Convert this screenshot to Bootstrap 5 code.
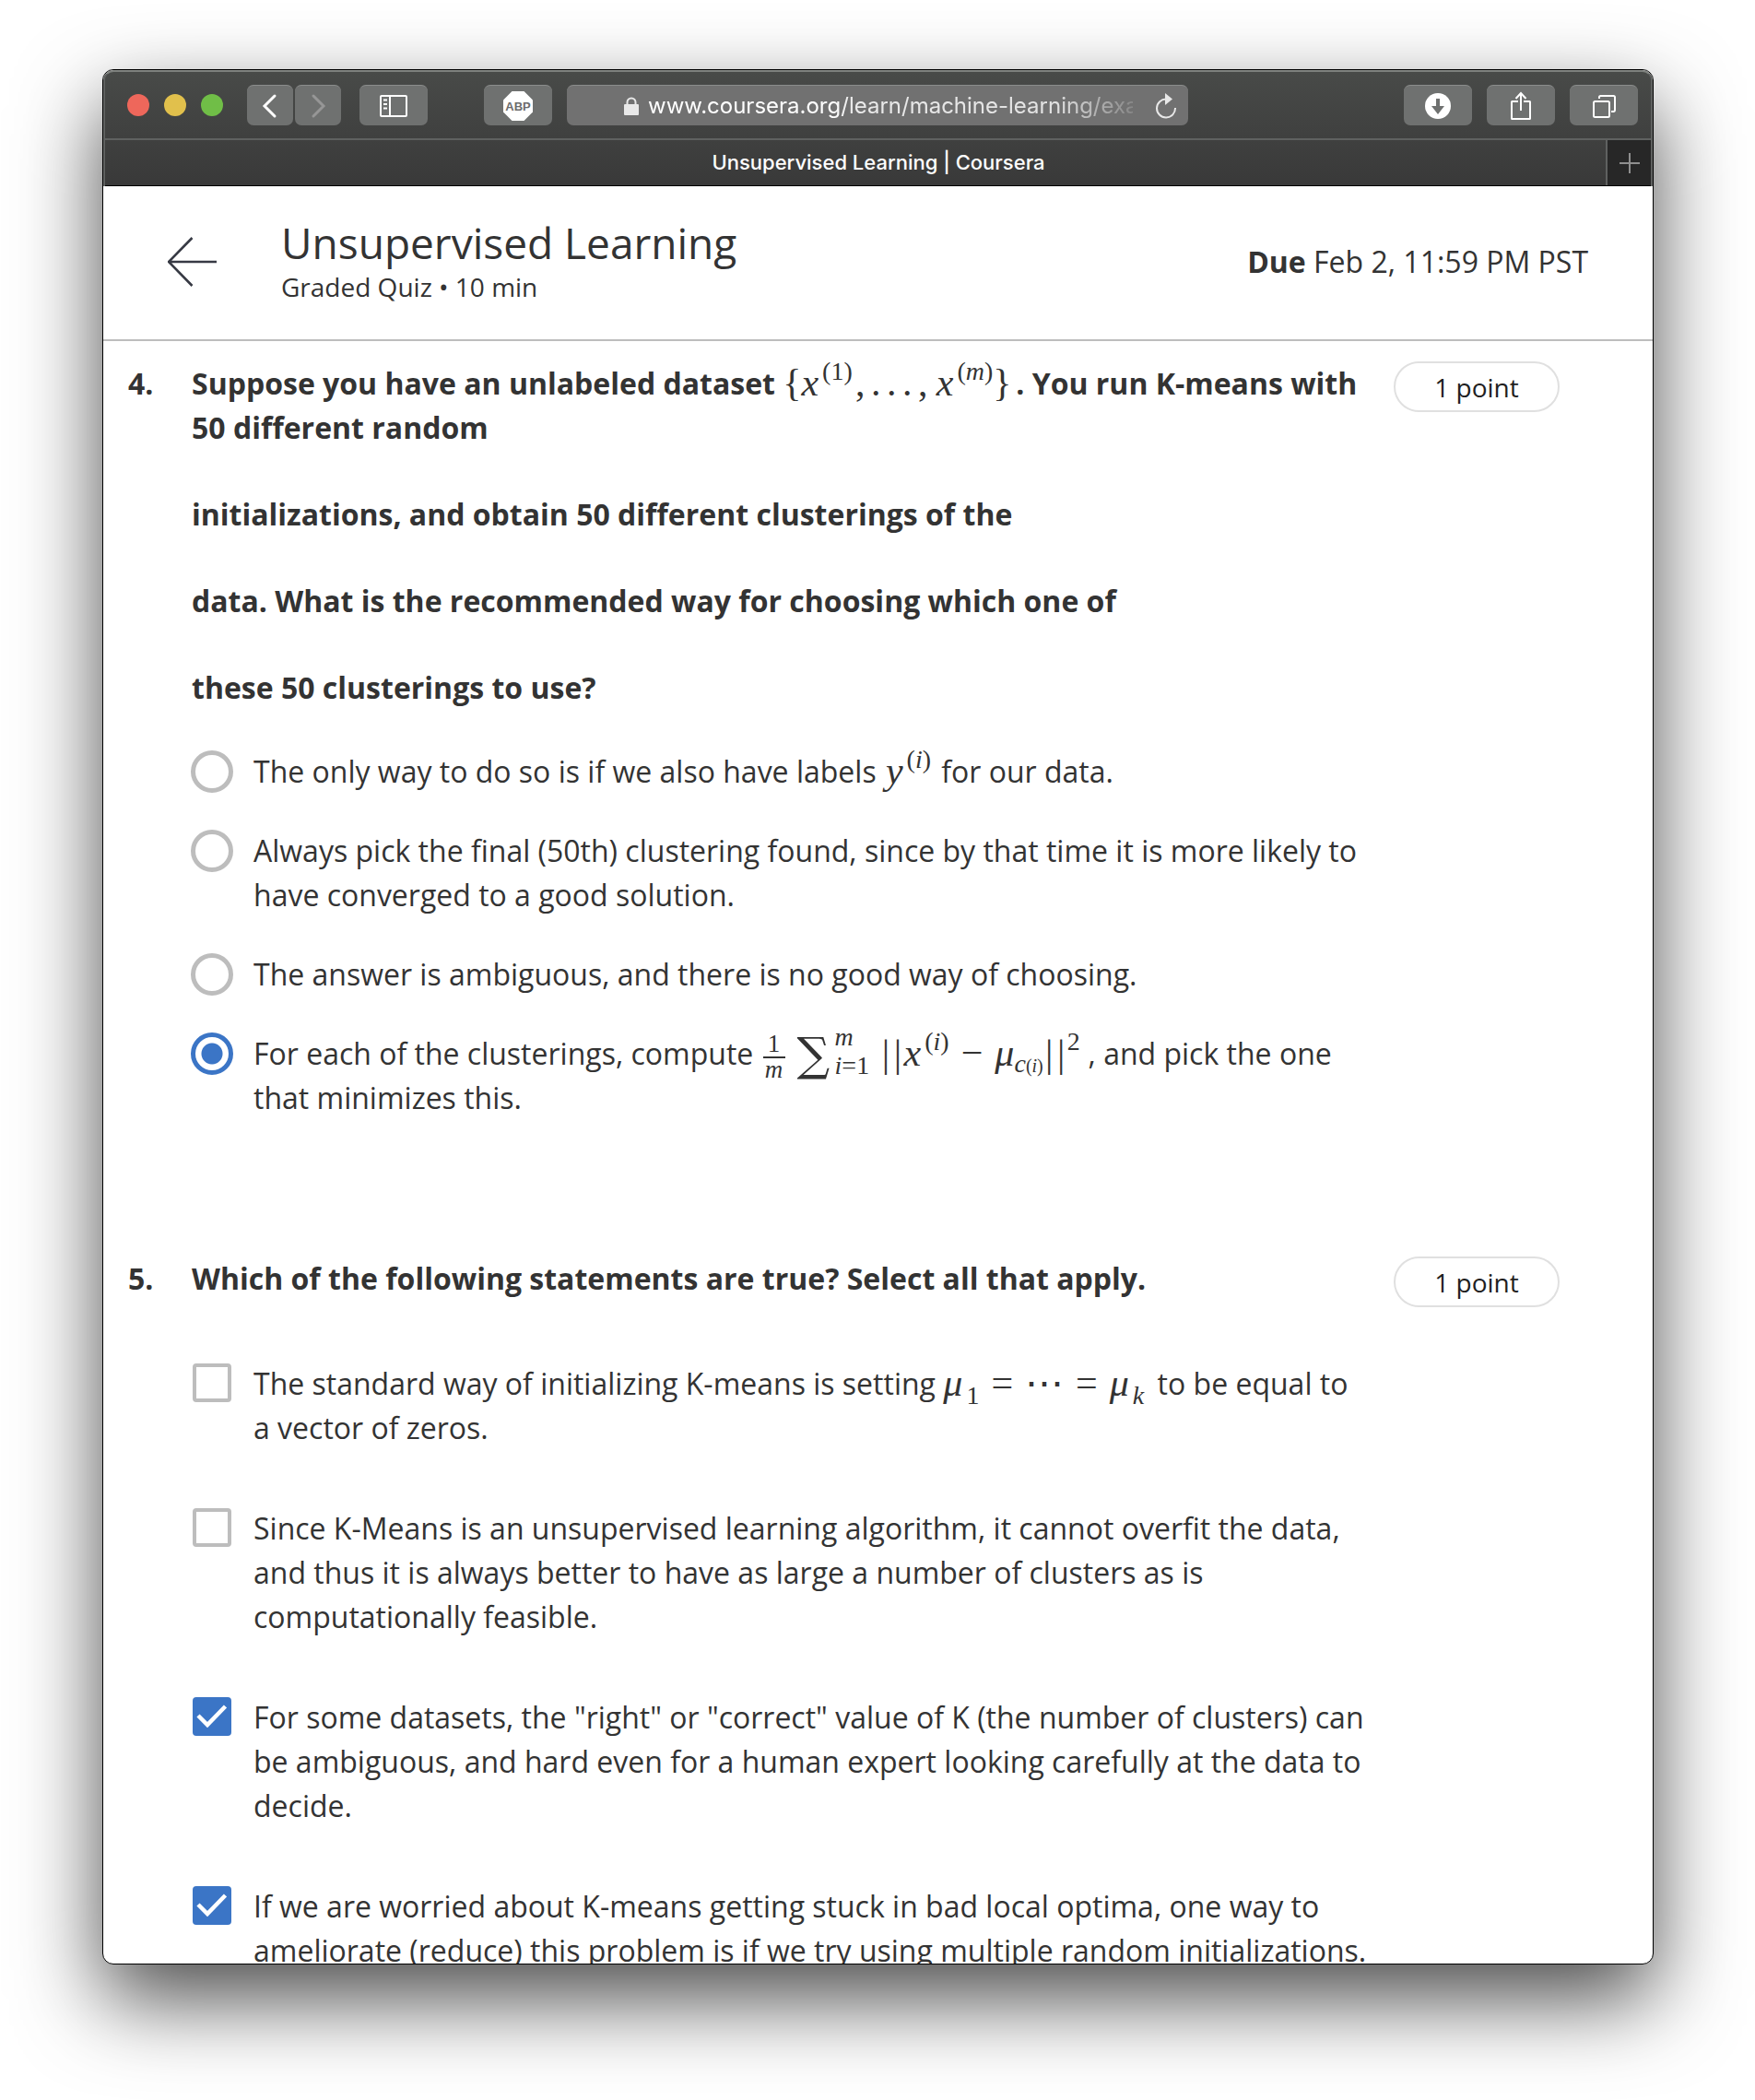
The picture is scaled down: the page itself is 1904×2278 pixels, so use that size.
<!DOCTYPE html>
<html lang="en">
<head>
<meta charset="utf-8">
<meta name="viewport" content="width=device-width, initial-scale=1">
<title>Unsupervised Learning | Coursera</title>
<link href="https://cdn.jsdelivr.net/npm/bootstrap@5.3.0/dist/css/bootstrap.min.css" rel="stylesheet">
<style>
body{background:#fff;color:#333;font-family:"Open Sans","Noto Sans",sans-serif;font-size:32px;line-height:48px}
.desk{height:100vh;padding:75px 110px 147px 111px}
.win{border:1px solid #000;border-radius:12px;background:#fff;box-shadow:0 38px 92px rgba(0,0,0,.7)}
/* browser chrome */
.chrome{background:linear-gradient(#484a48,#393939);border:solid #5f6160;border-width:2px 2px 0;border-top-color:#7f827f;border-radius:11px 11px 0 0;font-family:Inter,"Liberation Sans",sans-serif}
.tools{padding:14px 14px 14px 24px;height:72px}
.lamp{width:24px;height:24px;border-radius:50%;margin-right:16px}
.lamp-r{background:#ee675b}.lamp-y{background:#e1c04c}.lamp-g{background:#70be47}
.pair{gap:2px;margin:0 20px 0 10px}
.tool{width:74px;height:44px;padding:0;border:0;border-top:1px solid #8b8d8c;border-radius:7px;background:#6f7170;color:#fff}
.tool.half{width:50px}
.tool.apart{margin-left:61px}
.tool svg{display:block;margin:auto}
.urlbar{width:674px;height:44px;border-top:1px solid #8b8d8c;border-radius:7px;background:#717171;margin-left:16px;padding:0 12px 0 62px}
.urlbar input{flex:1;min-width:0;background:none;border:0;padding:0;margin:0 24px 0 10px;color:#fff;outline:0;font-size:24px;line-height:40px;-webkit-mask-image:linear-gradient(90deg,#000 38%,rgba(0,0,0,.85) 42%,rgba(0,0,0,.8) 84%,transparent 104%);mask-image:linear-gradient(90deg,#000 38%,rgba(0,0,0,.85) 42%,rgba(0,0,0,.8) 84%,transparent 104%)}
.tabs{height:52px;border-top:2px solid #5f6160;border-bottom:1px solid #000}
.tabname{padding-left:50px;font-size:22px;line-height:48px;font-weight:500;color:#fff;text-decoration:none}
.plus{width:49px;border:0;border-left:2px solid #5f6160;background:#272727;padding:0}
/* quiz header */
.quizhead{height:168px;border-bottom:2px solid #bdbdbd;padding:0 70px 2px}
.quizhead h1{font-size:46px;line-height:54px;font-weight:400;margin:0}
.heading{padding-left:69px}
.sub28{font-size:28px;line-height:42px}
/* questions */
.quiz{min-height:0}
.qblock{padding:22px 101px 0 27px}
.qblock + .qblock{padding-top:148px}
.qnum{width:69px}
.ask{font-weight:700}
.ask p{margin:0 0 46px}
.pill{width:180px;height:55px;border:2px solid #e0e0e0;border-radius:28px;font-size:28px;line-height:53px;color:#1f1f1f;margin-left:24px}
.opt{display:flex;align-items:flex-start}
.opt input{appearance:none;flex:none;margin:0;background:#fff center/contain no-repeat;border:5px solid #bdbdbd}
.opt input[type=radio]{width:46px;height:46px;border-radius:50%;margin:1px 22px 0 -1px}
.opt input[type=radio]:checked{border-color:#3b75c6;background:radial-gradient(circle,#3b75c6 11px,#fff 12px)}
.opt input[type=checkbox]{width:42px;height:42px;border-width:4px;border-radius:4px;margin:2px 24px 0 1px}
.opt input[type=checkbox]:checked{border:0;background-color:#3b75c6;background-image:url("data:image/svg+xml,%3Csvg xmlns='http://www.w3.org/2000/svg' viewBox='0 0 42 42'%3E%3Cpath d='M6 20l10 10L35.500 10' fill='none' stroke='%23fff' stroke-width='4.500'/%3E%3C/svg%3E")}
.radios{gap:38px;padding-top:43px}
.checks{gap:61px;padding-top:66px}
/* formulas: tokens sit on the bottom edge of a 40px box, raised or lowered by a margin */
.fx{display:inline-flex;align-items:flex-end;height:40px;vertical-align:middle;white-space:nowrap;font-family:"Liberation Serif",serif;font-weight:400;font-size:42px;line-height:40px}
.fx>*{flex:none;margin-bottom:4px}
.fx>.up,.fx>.dn{font-size:28px;line-height:28px;margin-left:4px}
.fx>.up{margin-bottom:22px}
.fx>.dn{margin-bottom:-4px}
.fx small{font-size:20px}
.fx>.cell{width:17px;text-align:center}
.fx>.bar{width:13px;text-align:center;margin-bottom:3px}
.fx>.sp{width:6px}
.fx>.sp2{width:13px}
.fx-set{width:253px}.fx-y{width:54px;padding-left:2px}.fx-cost{width:355px;padding-left:2px}.fx-mu{width:224px}
.fx>.frac{width:24px;text-align:center;font-size:27px;line-height:24px;margin-bottom:-6px}
.frac span{display:block}
.frac span:first-child{border-bottom:2px solid #333;padding-bottom:2px}
.fx>.lims{width:46px;padding-left:3px;font-size:28px;line-height:24px;margin-bottom:-2px}
.lims span{display:block}
.lims span:first-child{margin-bottom:7px}
.fx>.big{width:38px;font-family:"DejaVu Serif","Liberation Serif",serif;font-size:50px;margin-bottom:2px}
</style>
</head>
<body>
<div class="desk d-flex">
<div class="win flex-fill d-flex flex-column overflow-hidden">
 <div class="chrome flex-shrink-0">
  <div class="tools d-flex align-items-center">
   <span class="lamp lamp-r"></span><span class="lamp lamp-y"></span><span class="lamp lamp-g"></span>
   <div class="pair d-flex">
    <button class="tool half" aria-label="Back"><svg width="20" height="28" viewBox="0 0 20 28"><path d="M15 3L4 14l11 11" fill="none" stroke="#fff" stroke-width="3" stroke-linecap="round"/></svg></button>
    <button class="tool half" aria-label="Forward"><svg width="20" height="28" viewBox="0 0 20 28"><path d="M5 3l11 11L5 25" fill="none" stroke="#969696" stroke-width="3" stroke-linecap="round"/></svg></button>
   </div>
   <button class="tool" aria-label="Sidebar"><svg width="30" height="26" viewBox="0 0 30 26" fill="none" stroke="#fff" stroke-width="2"><rect x="1" y="2" width="28" height="22" rx="1"/><path d="M11 2v22M4 6.500h4M4 11h4M4 15.500h4"/></svg></button>
   <button class="tool apart" aria-label="Ad blocker"><svg width="32" height="32" viewBox="0 0 32 32"><path d="M9.500 0h13L32 9.500v13L22.500 32h-13L0 22.500v-13z" fill="#fff"/><text x="16" y="20.500" text-anchor="middle" font-family="Liberation Sans" font-weight="700" font-size="13" fill="#6c6c6c">ABP</text></svg></button>
   <div class="urlbar d-flex align-items-center">
    <svg width="16" height="20" viewBox="0 0 16 20"><path d="M3.500 9V6a4.500 4.500 0 019 0v3" fill="none" stroke="#e8e8e8" stroke-width="2"/><rect y="8" width="16" height="12" rx="1" fill="#e8e8e8"/></svg>
    <input type="text" value="www.coursera.org/learn/machine-learning/exa" aria-label="Address">
    <svg width="24" height="28" viewBox="0 0 24 28"><path d="M12.500 6.500A10 10 0 1022 16" fill="none" stroke="#e8e8e8" stroke-width="2"/><path d="M11 0l8 6.500-8 6.500z" fill="#e8e8e8"/></svg>
   </div>
   <div class="d-flex gap-3 ms-auto">
    <button class="tool" aria-label="Downloads"><svg width="28" height="28" viewBox="0 0 28 28"><circle cx="14" cy="14" r="14" fill="#fff"/><path d="M12 6h4v8h5l-7 9-7-9h5z" fill="#6f7170"/></svg></button>
    <button class="tool" aria-label="Share"><svg width="24" height="32" viewBox="0 0 24 32" fill="none" stroke="#fff" stroke-width="2"><path d="M9 11H2.500q-.5 0-.5.5v18q0 .5.5.5h19q.5 0 .5-.5v-18q0-.5-.5-.5H15M12 21V3M6.500 8L12 2l5.500 6"/></svg></button>
    <button class="tool" aria-label="Show tabs"><svg width="26" height="26" viewBox="0 0 26 26" fill="none" stroke="#fff" stroke-width="2"><rect x="2" y="8" width="17" height="17" rx="1.500"/><path d="M8 5V3.500Q8 2 9.500 2h14Q25 2 25 3.500V17q0 2-1.500 2H21"/></svg></button>
   </div>
  </div>
  <div class="tabs d-flex">
   <a class="tabname flex-fill text-center" href="#">Unsupervised Learning | Coursera</a>
   <button class="plus" aria-label="New tab"><svg class="d-block m-auto" width="22" height="22"><path d="M11 0v22M0 11h22" stroke="#8f8f8f" stroke-width="2"/></svg></button>
  </div>
 </div>
 <header class="quizhead d-flex align-items-center flex-shrink-0">
  <a href="#" aria-label="Back to course" class="lh-1"><svg class="d-block" width="54" height="54" viewBox="0 0 54 54"><path d="M26.500 1L1 27l25.500 26M1 27h52" fill="none" stroke="#373a44" stroke-width="2.600"/></svg></a>
  <div class="heading flex-fill"><h1>Unsupervised Learning</h1><div class="sub28">Graded Quiz • 10 min</div></div>
  <div><strong>Due</strong> Feb 2, 11:59 PM PST</div>
 </header>
 <main class="quiz flex-fill overflow-hidden">
  <section class="qblock d-flex align-items-start">
   <div class="qnum ask flex-shrink-0">4.</div>
   <div class="flex-fill">
    <div class="ask">
     <p>Suppose you have an unlabeled dataset <span class="fx fx-set"><span>{</span><i>x</i><span class="up">(1)</span><span class="cell">,</span><span class="cell">.</span><span class="cell">.</span><span class="cell">.</span><span class="cell">,</span><span class="sp"></span><i>x</i><span class="up">(<i>m</i>)</span><span>}</span></span>. You run K-means with 50 different random</p>
     <p>initializations, and obtain 50 different clusterings of the</p>
     <p>data. What is the recommended way for choosing which one of</p>
     <p class="mb-0">these 50 clusterings to use?</p>
    </div>
    <div class="radios d-flex flex-column" role="radiogroup">
     <label class="opt"><input type="radio" name="q4"><span>The only way to do so is if we also have labels <span class="fx fx-y"><i>y</i><span class="up">(<i>i</i>)</span></span> for our data.</span></label>
     <label class="opt"><input type="radio" name="q4"><span>Always pick the final (50th) clustering found, since by that time it is more likely to have converged to a good solution.</span></label>
     <label class="opt"><input type="radio" name="q4"><span>The answer is ambiguous, and there is no good way of choosing.</span></label>
     <label class="opt"><input type="radio" name="q4" checked><span>For each of the clusterings, compute <span class="fx fx-cost"><span class="frac"><span>1</span><span><i>m</i></span></span><span class="sp2"></span><span class="big">∑</span><span class="lims"><span><i>m</i></span><span><i>i</i>=1</span></span><span class="sp"></span><span class="bar">|</span><span class="bar">|</span><i>x</i><span class="up">(<i>i</i>)</span><span class="sp2"></span><span>−</span><span class="sp2"></span><i>μ</i><span class="dn ms-0"><i>c</i><small>(<i>i</i>)</small></span><span class="bar">|</span><span class="bar">|</span><span class="up ms-0">2</span></span>, and pick the one that minimizes this.</span></label>
    </div>
   </div>
   <div class="pill text-center flex-shrink-0">1 point</div>
  </section>
  <section class="qblock d-flex align-items-start">
   <div class="qnum ask flex-shrink-0">5.</div>
   <div class="flex-fill">
    <div class="ask">Which of the following statements are true? Select all that apply.</div>
    <div class="checks d-flex flex-column">
     <label class="opt"><input type="checkbox"><span>The standard way of initializing K-means is setting <span class="fx fx-mu"><i>μ</i><span class="dn">1</span><span class="sp2"></span><span>=</span><span class="sp2"></span><span>⋯</span><span class="sp2"></span><span>=</span><span class="sp2"></span><i>μ</i><span class="dn"><i>k</i></span></span> to be equal to a vector of zeros.</span></label>
     <label class="opt"><input type="checkbox"><span>Since K-Means is an unsupervised learning algorithm, it cannot overfit the data, and thus it is always better to have as large a number of clusters as is computationally feasible.</span></label>
     <label class="opt"><input type="checkbox" checked><span>For some datasets, the "right" or "correct" value of K (the number of clusters) can be ambiguous, and hard even for a human expert looking carefully at the data to decide.</span></label>
     <label class="opt"><input type="checkbox" checked><span>If we are worried about K-means getting stuck in bad local optima, one way to ameliorate (reduce) this problem is if we try using multiple random initializations.</span></label>
    </div>
   </div>
   <div class="pill text-center flex-shrink-0">1 point</div>
  </section>
 </main>
</div>
</div>
<script src="https://cdn.jsdelivr.net/npm/bootstrap@5.3.0/dist/js/bootstrap.bundle.min.js"></script>
</body>
</html>
